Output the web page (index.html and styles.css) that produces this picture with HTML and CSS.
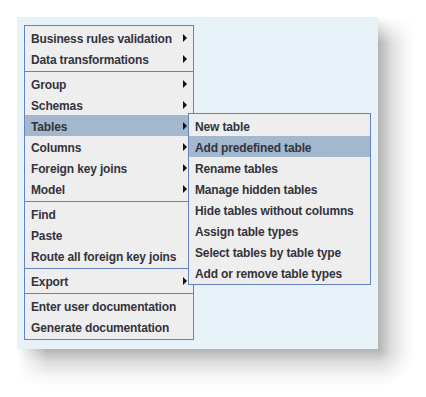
FILE: index.html
```html
<!DOCTYPE html>
<html lang="en">
<head>
    <meta charset="UTF-8"/>
    <title>menu</title>
    <link rel="stylesheet" href="styles.css">
</head>
<body>
<div class="panel">
    <div class="menu main-menu">
        <div class="item sub">Business rules validation</div>
        <div class="item sub">Data transformations</div>
        <div class="sep"></div>
        <div class="item sub">Group</div>
        <div class="item sub">Schemas</div>
        <div class="item sub active">Tables</div>
        <div class="item sub">Columns</div>
        <div class="item sub">Foreign key joins</div>
        <div class="item sub">Model</div>
        <div class="sep"></div>
        <div class="item">Find</div>
        <div class="item">Paste</div>
        <div class="item">Route all foreign key joins</div>
        <div class="sep"></div>
        <div class="item sub">Export</div>
        <div class="sep"></div>
        <div class="item">Enter user documentation</div>
        <div class="item">Generate documentation</div>

        <div class="menu sub-menu">
            <div class="item">New table</div>
            <div class="item active">Add predefined table</div>
            <div class="item">Rename tables</div>
            <div class="item">Manage hidden tables</div>
            <div class="item">Hide tables without columns</div>
            <div class="item">Assign table types</div>
            <div class="item">Select tables by table type</div>
            <div class="item">Add or remove table types</div>
        </div>
    </div>
</div>
</body>
</html>
```

FILE: styles.css
```css
html, body {
    margin: 0;
    min-height: 397px;
    background: #fff;
}

body {
    padding: 17px 0 48px 17px;
    box-sizing: border-box;
    font-family: "Liberation Sans", Arial, sans-serif;
}

.panel {
    position: relative;
    width: 354px;
    height: 324px;
    padding: 8px 0 0 7px;
    background: #e6f2f8;
}

/* drop shadow, right and bottom */
.panel::before,
.panel::after {
    content: "";
    position: absolute;
}

.panel::before {
    left: 100%;
    top: 0;
    width: 38px;
    height: 100%;
    background: linear-gradient(to right, rgba(0, 0, 0, 0.3), rgba(0, 0, 0, 0.13) 35%, rgba(0, 0, 0, 0.03) 75%, rgba(0, 0, 0, 0));
    -webkit-mask-image: linear-gradient(to bottom, transparent 0, #000 26px);
    mask-image: linear-gradient(to bottom, transparent 0, #000 26px);
}

.panel::after {
    top: 100%;
    left: 0;
    width: calc(100% + 38px);
    height: 38px;
    background:
        radial-gradient(circle at 0 0, rgba(0, 0, 0, 0.3), rgba(0, 0, 0, 0.13) 13px, rgba(0, 0, 0, 0.03) 28px, rgba(0, 0, 0, 0) 38px) right top / 38px 38px no-repeat,
        linear-gradient(to bottom, rgba(0, 0, 0, 0.3), rgba(0, 0, 0, 0.13) 35%, rgba(0, 0, 0, 0.03) 75%, rgba(0, 0, 0, 0)) left top / calc(100% - 38px) 100% no-repeat;
    -webkit-mask-image: linear-gradient(to right, transparent 0, #000 30px);
    mask-image: linear-gradient(to right, transparent 0, #000 30px);
}

.menu {
    background: #eeeeee;
    border: 1px solid #6382bf;
    box-sizing: border-box;
}

.main-menu {
    position: relative;
    width: 170px;
    padding: 1px 0 2px;
}

.sub-menu {
    position: absolute;
    left: 163px;
    top: 87px;
    width: 183px;
    padding: 1px 0;
}

.item {
    position: relative;
    height: 21px;
    line-height: 24px;
    padding-left: 6px;
    font-size: 12px;
    font-weight: bold;
    letter-spacing: -0.15px;
    color: #33333d;
    white-space: nowrap;
}

.item.active {
    background: #a3b8cc;
}

.sub::after {
    content: "";
    position: absolute;
    right: 6px;
    top: 7px;
    border-left: 4px solid #111;
    border-top: 4px solid transparent;
    border-bottom: 4px solid transparent;
}

.sep {
    margin: 2px 0 1px;
    border-top: 1px solid #6382bf;
}
```
